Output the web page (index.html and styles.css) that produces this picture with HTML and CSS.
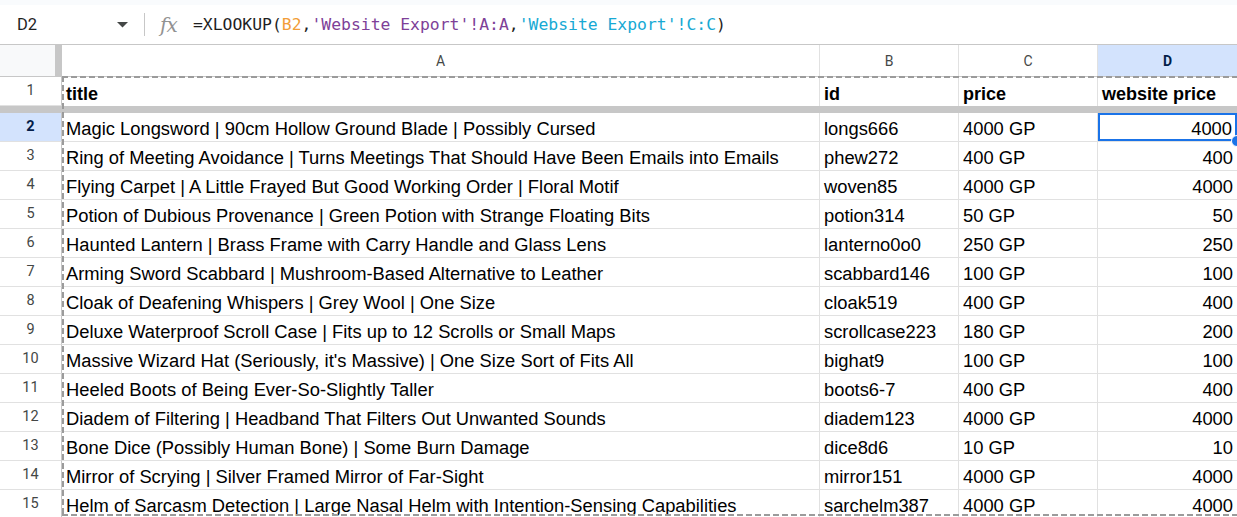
FILE: index.html
```html
<!DOCTYPE html>
<html>
<head>
<meta charset="utf-8">
<link rel="stylesheet" href="styles.css">
</head>
<body>
<div class="topstrip"></div>
<div class="fbar">
  <div class="namebox">D2</div>
  <div class="caret"><svg width="11" height="6" viewBox="0 0 11 6"><polygon points="0,0 11,0 5.5,5.5" fill="#444746"/></svg></div>
  <div class="sep"></div>
  <div class="fx">fx</div>
  <div class="formula">=XLOOKUP(<span class="r1">B2</span>,<span class="r2">'Website Export'!A:A</span>,<span class="r3">'Website Export'!C:C</span>)</div>
</div>
<div class="wrap">
  <div class="grid">
    <div class="corner"></div>
    <div class="ch">A</div>
    <div class="ch">B</div>
    <div class="ch">C</div>
    <div class="ch sel">D</div>

    <div class="rh">1</div>
    <div class="c b">title</div>
    <div class="c b">id</div>
    <div class="c b">price</div>
    <div class="c b">website price</div>

    <div class="freeze"></div>

    <div class="rh sel">2</div>
    <div class="c">Magic Longsword | 90cm Hollow Ground Blade | Possibly Cursed</div>
    <div class="c">longs666</div>
    <div class="c">4000 GP</div>
    <div class="c n active">4000<span class="handle"></span></div>

    <div class="rh">3</div>
    <div class="c">Ring of Meeting Avoidance | Turns Meetings That Should Have Been Emails into Emails</div>
    <div class="c">phew272</div>
    <div class="c">400 GP</div>
    <div class="c n">400</div>

    <div class="rh">4</div>
    <div class="c">Flying Carpet | A Little Frayed But Good Working Order | Floral Motif</div>
    <div class="c">woven85</div>
    <div class="c">4000 GP</div>
    <div class="c n">4000</div>

    <div class="rh">5</div>
    <div class="c">Potion of Dubious Provenance | Green Potion with Strange Floating Bits</div>
    <div class="c">potion314</div>
    <div class="c">50 GP</div>
    <div class="c n">50</div>

    <div class="rh">6</div>
    <div class="c">Haunted Lantern | Brass Frame with Carry Handle and Glass Lens</div>
    <div class="c">lanterno0o0</div>
    <div class="c">250 GP</div>
    <div class="c n">250</div>

    <div class="rh">7</div>
    <div class="c">Arming Sword Scabbard | Mushroom-Based Alternative to Leather</div>
    <div class="c">scabbard146</div>
    <div class="c">100 GP</div>
    <div class="c n">100</div>

    <div class="rh">8</div>
    <div class="c">Cloak of Deafening Whispers | Grey Wool | One Size</div>
    <div class="c">cloak519</div>
    <div class="c">400 GP</div>
    <div class="c n">400</div>

    <div class="rh">9</div>
    <div class="c">Deluxe Waterproof Scroll Case | Fits up to 12 Scrolls or Small Maps</div>
    <div class="c">scrollcase223</div>
    <div class="c">180 GP</div>
    <div class="c n">200</div>

    <div class="rh">10</div>
    <div class="c">Massive Wizard Hat (Seriously, it's Massive) | One Size Sort of Fits All</div>
    <div class="c">bighat9</div>
    <div class="c">100 GP</div>
    <div class="c n">100</div>

    <div class="rh">11</div>
    <div class="c">Heeled Boots of Being Ever-So-Slightly Taller</div>
    <div class="c">boots6-7</div>
    <div class="c">400 GP</div>
    <div class="c n">400</div>

    <div class="rh">12</div>
    <div class="c">Diadem of Filtering | Headband That Filters Out Unwanted Sounds</div>
    <div class="c">diadem123</div>
    <div class="c">4000 GP</div>
    <div class="c n">4000</div>

    <div class="rh">13</div>
    <div class="c">Bone Dice (Possibly Human Bone) | Some Burn Damage</div>
    <div class="c">dice8d6</div>
    <div class="c">10 GP</div>
    <div class="c n">10</div>

    <div class="rh">14</div>
    <div class="c">Mirror of Scrying | Silver Framed Mirror of Far-Sight</div>
    <div class="c">mirror151</div>
    <div class="c">4000 GP</div>
    <div class="c n">4000</div>

    <div class="rh">15</div>
    <div class="c">Helm of Sarcasm Detection | Large Nasal Helm with Intention-Sensing Capabilities</div>
    <div class="c">sarchelm387</div>
    <div class="c">4000 GP</div>
    <div class="c n">4000</div>
  </div>
  <div class="marquee"></div>
</div>
</body>
</html>
```

FILE: styles.css
```css
html, body {
  margin: 0;
  padding: 0;
  background: #fff;
  overflow: hidden;
}
body {
  width: 1237px;
  height: 517px;
  font-family: "Liberation Sans", Arial, sans-serif;
}
.topstrip {
  height: 5px;
  background: #f9fbfd;
}
.fbar {
  height: 39px;
  border-bottom: 1px solid #c7c7c7;
  display: flex;
  align-items: center;
  box-sizing: content-box;
}
.namebox {
  font-family: Roboto, "Liberation Sans", sans-serif;
  font-size: 16.5px;
  color: #1f1f1f;
  width: 117px;
  padding-left: 17px;
  box-sizing: border-box;
}
.caret {
  display: flex;
  align-items: center;
  width: 27px;
  height: 10px;
}
.sep {
  width: 1px;
  height: 23px;
  background: #c7c7c7;
}
.fx {
  font-family: "DejaVu Serif", "Liberation Serif", serif;
  font-style: italic;
  font-size: 20px;
  color: #929292;
  margin-left: 15px;
  width: 33px;
  letter-spacing: -1px;
  line-height: 20px;
}
.formula {
  font-family: "DejaVu Sans Mono", "Liberation Mono", monospace;
  font-size: 16.4px;
  color: #1f1f1f;
  white-space: nowrap;
}
.r1 { color: #f29d38; }
.r2 { color: #7e3f98; }
.r3 { color: #17a9d4; }

.wrap {
  position: relative;
}
.grid {
  display: grid;
  grid-template-columns: 62px 758px 139px 139px 140px;
  grid-template-rows: 32px 29px 7px repeat(14, 29px);
}
.corner {
  background: #f8f9fa;
  border-right: 7px solid #c7c7c7;
  border-bottom: 1px solid #c7c7c7;
}
.ch {
  display: flex;
  align-items: center;
  justify-content: center;
  font-family: Roboto, "Liberation Sans", sans-serif;
  font-size: 14px;
  color: #444746;
  border-right: 1px solid #e1e1e1;
  border-bottom: 1px solid #c7c7c7;
}
.ch.sel {
  background: #d3e3fd;
  color: #041e49;
  font-weight: bold;
}
.rh {
  display: flex;
  align-items: center;
  justify-content: center;
  font-family: Roboto, "Liberation Sans", sans-serif;
  font-size: 14.5px;
  color: #444746;
  border-right: 1px solid #c7c7c7;
  border-bottom: 1px solid #e1e1e1;
  padding-bottom: 1px;
}
.rh.sel {
  background: #d3e3fd;
  color: #041e49;
  font-weight: bold;
}
.c {
  display: flex;
  align-items: flex-end;
  padding: 0 4px 1px 4px;
  font-size: 18.35px;
  line-height: 22px;
  color: #000;
  white-space: nowrap;
  overflow: hidden;
  border-right: 1px solid #e1e1e1;
  border-bottom: 1px solid #e1e1e1;
  min-width: 0;
}
.c.b {
  font-weight: bold;
  font-size: 18px;
  border-bottom: none;
}
.c.n {
  justify-content: flex-end;
}
.c.active {
  position: relative;
  overflow: visible;
  box-shadow: inset 0 0 0 2px #1a73e8;
  padding-right: 5px;
}
.handle {
  position: absolute;
  right: -6px;
  bottom: -6px;
  width: 10px;
  height: 10px;
  border-radius: 50%;
  background: #1a73e8;
  border: 1px solid #fff;
}
.freeze {
  grid-column: 1 / -1;
  background: #c7c7c7;
}
.marquee {
  position: absolute;
  left: 62px;
  top: 31px;
  width: 1190px;
  height: 440px;
  pointer-events: none;
  background:
    repeating-linear-gradient(90deg, #9b9b9b 0 6px, transparent 6px 9px) left top / 100% 2px no-repeat,
    repeating-linear-gradient(90deg, #9b9b9b 0 6px, transparent 6px 9px) left bottom / 100% 2px no-repeat,
    repeating-linear-gradient(180deg, #9b9b9b 0 6px, transparent 6px 9px) left top / 2px 100% no-repeat;
}
```
